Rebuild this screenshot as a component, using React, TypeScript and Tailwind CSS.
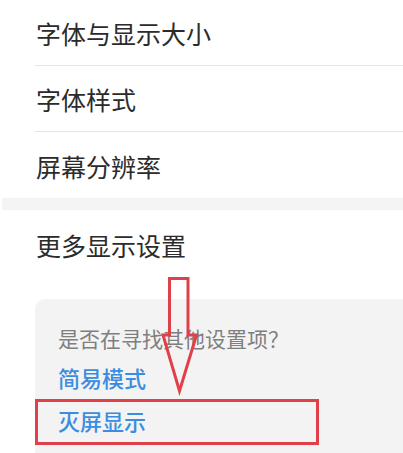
import React from 'react';

const rows = ['字体与显示大小', '字体样式', '屏幕分辨率'];

const font = { fontFamily: '"Noto Sans CJK SC", "Noto Sans", sans-serif' };

const App: React.FC = () => {
    return (
        <div className="relative w-[403px] h-[453px] overflow-hidden bg-white" style={font}>
            <div className="pl-[35px]">
                {rows.map((r, i) => (
                    <div
                        key={r}
                        className={`h-[66px] flex items-center pl-px pt-[3px] text-[25px] text-[#2b2b2b] ${i < 2 ? 'border-b border-[#e6e6e6]' : ''}`}
                    >
                        {r}
                    </div>
                ))}
            </div>
            <div className="ml-[2px] h-[12px] bg-[#f4f4f4]" />
            <div className="pl-[36px] h-[70px] flex items-center pt-[2px] text-[25px] text-[#2b2b2b]">更多显示设置</div>

            <div className="ml-[35px] mt-[19px] rounded-l-[10px] bg-[#f3f3f3] pl-[23px] pt-[24px] pb-[30px]">
                <div className="text-[21px] leading-[30px] text-[#7f7f7f]">是否在寻找其他设置项？</div>
                <div className="mt-[9px] text-[22px] leading-[30px] font-medium text-[#3a8de0]">简易模式</div>
                <div className="mt-[13px] text-[22px] leading-[30px] font-medium text-[#3a8de0]">灭屏显示</div>
            </div>

            {/* annotation: red box */}
            <div className="absolute left-[35px] top-[399px] w-[284px] h-[46px] border-[3px] border-[#e0404a]" />

            {/* annotation: arrow */}
            <svg className="absolute left-[160px] top-[274px]" width="40" height="122" viewBox="0 0 40 122">
                <path
                    d="M9.5 4.5 H28 V61 H36.5 L19.5 117 L3 61 H9.5 Z"
                    fill="none"
                    stroke="#e0404a"
                    strokeWidth="3"
                    strokeLinejoin="miter"
                />
            </svg>
        </div>
    );
};

export default App;
